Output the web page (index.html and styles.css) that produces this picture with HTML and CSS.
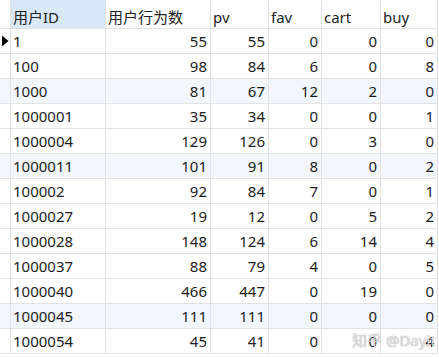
FILE: index.html
```html
<!DOCTYPE html>
<html>
<head>
<meta charset="utf-8">
<link rel="stylesheet" href="styles.css">
</head>
<body>
<div class="grid">
  <div class="row head">
    <div class="c ind"></div>
    <div class="c sel">用户ID</div>
    <div class="c">用户行为数</div>
    <div class="c">pv</div>
    <div class="c">fav</div>
    <div class="c">cart</div>
    <div class="c">buy</div>
  </div>
  <div class="row"><div class="c ind"><svg width="8" height="12" viewBox="0 0 8 12"><polygon points="1,0.5 7.5,6 1,11.5" fill="#000"/></svg></div><div class="c">1</div><div class="c n">55</div><div class="c n">55</div><div class="c n">0</div><div class="c n">0</div><div class="c n">0</div></div>
  <div class="row"><div class="c ind"></div><div class="c">100</div><div class="c n">98</div><div class="c n">84</div><div class="c n">6</div><div class="c n">0</div><div class="c n">8</div></div>
  <div class="row alt"><div class="c ind"></div><div class="c">1000</div><div class="c n">81</div><div class="c n">67</div><div class="c n">12</div><div class="c n">2</div><div class="c n">0</div></div>
  <div class="row"><div class="c ind"></div><div class="c">1000001</div><div class="c n">35</div><div class="c n">34</div><div class="c n">0</div><div class="c n">0</div><div class="c n">1</div></div>
  <div class="row"><div class="c ind"></div><div class="c">1000004</div><div class="c n">129</div><div class="c n">126</div><div class="c n">0</div><div class="c n">3</div><div class="c n">0</div></div>
  <div class="row alt"><div class="c ind"></div><div class="c">1000011</div><div class="c n">101</div><div class="c n">91</div><div class="c n">8</div><div class="c n">0</div><div class="c n">2</div></div>
  <div class="row"><div class="c ind"></div><div class="c">100002</div><div class="c n">92</div><div class="c n">84</div><div class="c n">7</div><div class="c n">0</div><div class="c n">1</div></div>
  <div class="row"><div class="c ind"></div><div class="c">1000027</div><div class="c n">19</div><div class="c n">12</div><div class="c n">0</div><div class="c n">5</div><div class="c n">2</div></div>
  <div class="row"><div class="c ind"></div><div class="c">1000028</div><div class="c n">148</div><div class="c n">124</div><div class="c n">6</div><div class="c n">14</div><div class="c n">4</div></div>
  <div class="row"><div class="c ind"></div><div class="c">1000037</div><div class="c n">88</div><div class="c n">79</div><div class="c n">4</div><div class="c n">0</div><div class="c n">5</div></div>
  <div class="row"><div class="c ind"></div><div class="c">1000040</div><div class="c n">466</div><div class="c n">447</div><div class="c n">0</div><div class="c n">19</div><div class="c n">0</div></div>
  <div class="row alt"><div class="c ind"></div><div class="c">1000045</div><div class="c n">111</div><div class="c n">111</div><div class="c n">0</div><div class="c n">0</div><div class="c n">0</div></div>
  <div class="row"><div class="c ind"></div><div class="c">1000054</div><div class="c n">45</div><div class="c n">41</div><div class="c n">0</div><div class="c n">0</div><div class="c n">4</div></div>
  <div class="mark">知乎 @Dayit</div>
</div>
</body>
</html>
```
FILE: styles.css
```css
html, body {
  margin: 0;
  padding: 0;
  background: #ffffff;
}
body {
  width: 439px;
  height: 357px;
  overflow: hidden;
  font-family: "Noto Sans", "Noto Sans CJK SC", sans-serif;
  font-size: 15px;
  color: #1c1c1c;
}
.grid {
  position: relative;
  width: 438px;
}
.row {
  display: grid;
  grid-template-columns: 11px 95px 105px 58px 53px 59px 57px;
  height: 25px;
}
.row.head {
  height: 29px;
}
.row.alt {
  background: #f3f7fb;
}
.c {
  box-sizing: border-box;
  border-right: 1px solid #e2e2e2;
  border-bottom: 1px solid #e2e2e2;
  padding: 0 3px 0 2px;
  line-height: 24px;
  white-space: nowrap;
  overflow: hidden;
}
.head .c {
  line-height: 20px;
  padding-top: 7px;
  color: #222;
}
.head .sel {
  background: #d9e8f7;
}
.c.n {
  text-align: right;
  padding-right: 3px;
}
.c.ind {
  padding: 0;
  display: flex;
  align-items: center;
  justify-content: center;
}
.mark {
  position: absolute;
  left: 352px;
  top: 330px;
  font-size: 15px;
  color: rgba(235, 235, 235, 0.85);
  text-shadow: 0 0 1px rgba(90, 90, 90, 0.7);
  white-space: nowrap;
  line-height: 20px;
}
```
